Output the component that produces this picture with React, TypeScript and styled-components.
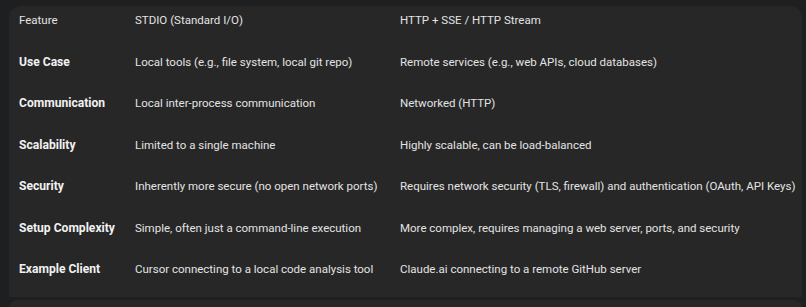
import { FC } from 'react';
import styled, { createGlobalStyle } from 'styled-components';

const GlobalStyle = createGlobalStyle`
  html, body {
    margin: 0;
    padding: 0;
    background-color: #1e1f20;
    overflow: hidden;
  }
  body {
    font-family: Roboto, 'Noto Sans', 'Liberation Sans', sans-serif;
    color: #e3e3e3;
  }
`;

const Page = styled.div`
  display: flex;
  flex-direction: column;
  gap: 3px;
  padding: 6px 4px 0 9px;
`;

const Card = styled.div`
  background-color: #272727;
  border-radius: 12px 12px 0 0;
  overflow: hidden;
`;

const Table = styled.table`
  width: 100%;
  border-collapse: collapse;
  table-layout: fixed;
`;

const Cell = styled.td<{ $bold?: boolean }>`
  padding: 6px 10px 0;
  height: 41.5px;
  box-sizing: border-box;
  line-height: 16px;
  vertical-align: top;
  text-align: left;
  white-space: nowrap;
  font-size: ${(p) => (p.$bold ? '12.1px' : '11.5px')};
  font-weight: ${(p) => (p.$bold ? 700 : 400)};
  color: ${(p) => (p.$bold ? '#f1f1f1' : '#e3e3e3')};
`;

const NextCard = styled.div`
  background-color: #272727;
  border-radius: 8px 8px 0 0;
  height: 20px;
`;

const rows: [string, string, string][] = [
  ['Use Case', 'Local tools (e.g., file system, local git repo)', 'Remote services (e.g., web APIs, cloud databases)'],
  ['Communication', 'Local inter-process communication', 'Networked (HTTP)'],
  ['Scalability', 'Limited to a single machine', 'Highly scalable, can be load-balanced'],
  ['Security', 'Inherently more secure (no open network ports)', 'Requires network security (TLS, firewall) and authentication (OAuth, API Keys)'],
  ['Setup Complexity', 'Simple, often just a command-line execution', 'More complex, requires managing a web server, ports, and security'],
  ['Example Client', 'Cursor connecting to a local code analysis tool', 'Claude.ai connecting to a remote GitHub server'],
];

const App: FC = () => (
  <>
    <GlobalStyle />
    <Page>
      <Card>
        <Table>
          <colgroup>
            <col style={{ width: 116 }} />
            <col style={{ width: 265 }} />
            <col />
          </colgroup>
          <thead>
            <tr>
              <Cell as="th">Feature</Cell>
              <Cell as="th">STDIO (Standard I/O)</Cell>
              <Cell as="th">HTTP + SSE / HTTP Stream</Cell>
            </tr>
          </thead>
          <tbody>
            {rows.map(([feature, stdio, http]) => (
              <tr key={feature}>
                <Cell $bold>{feature}</Cell>
                <Cell>{stdio}</Cell>
                <Cell>{http}</Cell>
              </tr>
            ))}
          </tbody>
        </Table>
      </Card>
      <NextCard />
    </Page>
  </>
);

export default App;
